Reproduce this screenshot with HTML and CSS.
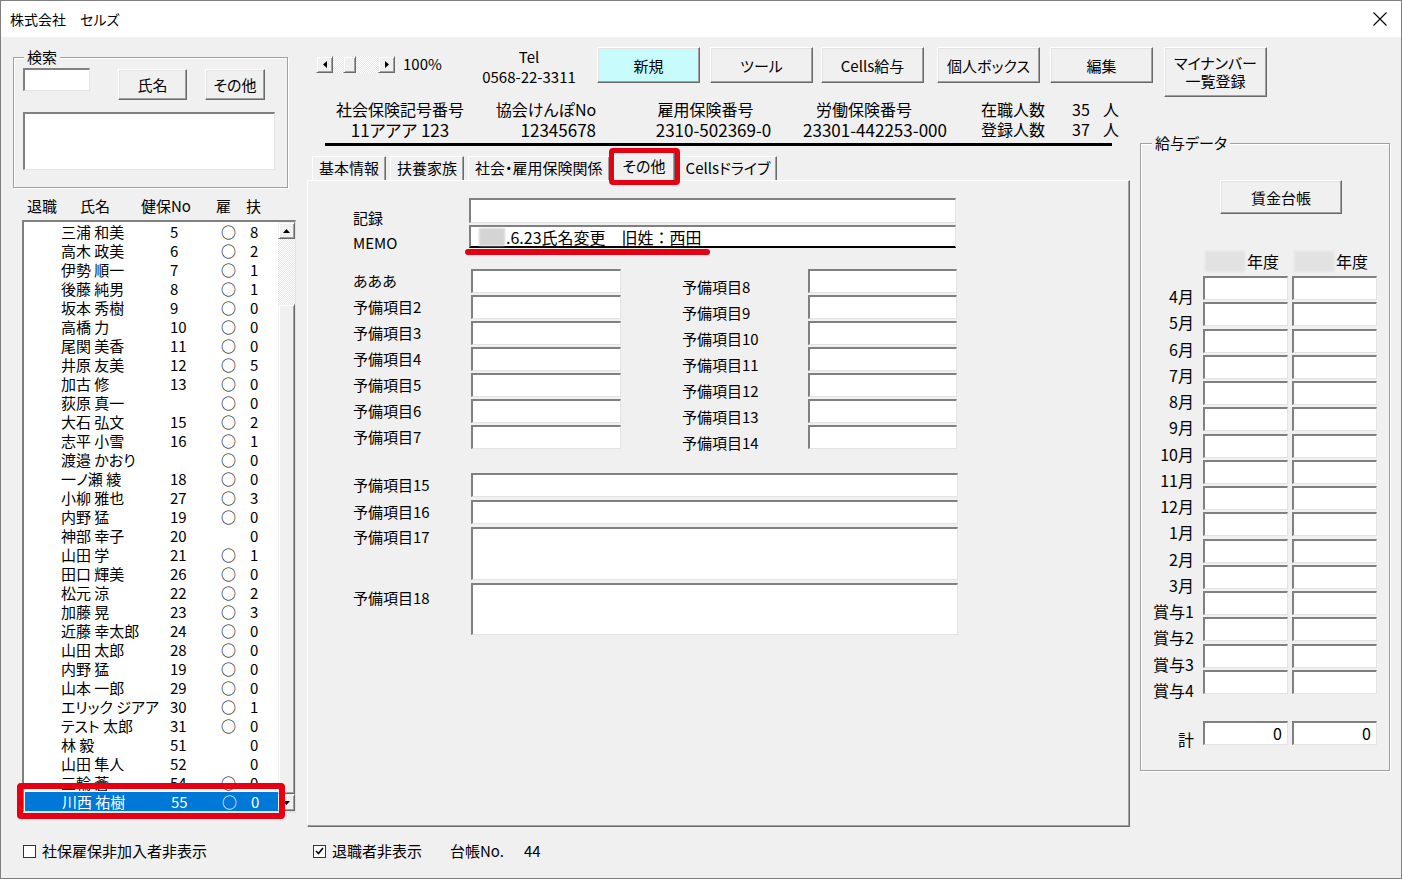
FILE: index.html
```html
<!DOCTYPE html>
<html lang="ja">
<head>
  <meta charset="UTF-8">
  <title>株式会社　セルズ</title>
  <link rel="stylesheet" href="styles.css">
</head>
<body>
  <div class="window">
    <div class="titlebar">
      <span class="title">株式会社　セルズ</span>
      <svg class="close" width="14" height="14" viewBox="0 0 14 14"><path d="M0.5 0.5L13.5 13.5M13.5 0.5L0.5 13.5" stroke="#000" stroke-width="1.1" fill="none"/></svg>
    </div>

    <div class="client">
      <!-- left: search + employee list -->
      <aside class="side-left">
        <div class="frame search">
          <span class="caption">検索</span>
          <div class="search-row">
            <div class="field search-input"></div>
            <button class="btn btn-name">氏名</button>
            <button class="btn btn-other">その他</button>
          </div>
          <div class="field search-result"></div>
        </div>

        <div class="list-head">
          <span>退職</span><span>氏名</span><span>健保No</span><span>雇</span><span>扶</span>
        </div>

        <div class="listbox">
          <div class="list-rows">
            <div class="row"><span class="nm">三浦 和美</span><span>5</span><span>○</span><span>8</span></div>
            <div class="row"><span class="nm">高木 政美</span><span>6</span><span>○</span><span>2</span></div>
            <div class="row"><span class="nm">伊勢 順一</span><span>7</span><span>○</span><span>1</span></div>
            <div class="row"><span class="nm">後藤 純男</span><span>8</span><span>○</span><span>1</span></div>
            <div class="row"><span class="nm">坂本 秀樹</span><span>9</span><span>○</span><span>0</span></div>
            <div class="row"><span class="nm">高橋 力</span><span>10</span><span>○</span><span>0</span></div>
            <div class="row"><span class="nm">尾関 美香</span><span>11</span><span>○</span><span>0</span></div>
            <div class="row"><span class="nm">井原 友美</span><span>12</span><span>○</span><span>5</span></div>
            <div class="row"><span class="nm">加古 修</span><span>13</span><span>○</span><span>0</span></div>
            <div class="row"><span class="nm">荻原 真一</span><span></span><span>○</span><span>0</span></div>
            <div class="row"><span class="nm">大石 弘文</span><span>15</span><span>○</span><span>2</span></div>
            <div class="row"><span class="nm">志平 小雪</span><span>16</span><span>○</span><span>1</span></div>
            <div class="row"><span class="nm">渡邉 かおり</span><span></span><span>○</span><span>0</span></div>
            <div class="row"><span class="nm">一ノ瀬 綾</span><span>18</span><span>○</span><span>0</span></div>
            <div class="row"><span class="nm">小柳 雅也</span><span>27</span><span>○</span><span>3</span></div>
            <div class="row"><span class="nm">内野 猛</span><span>19</span><span>○</span><span>0</span></div>
            <div class="row"><span class="nm">神部 幸子</span><span>20</span><span></span><span>0</span></div>
            <div class="row"><span class="nm">山田 学</span><span>21</span><span>○</span><span>1</span></div>
            <div class="row"><span class="nm">田口 輝美</span><span>26</span><span>○</span><span>0</span></div>
            <div class="row"><span class="nm">松元 涼</span><span>22</span><span>○</span><span>2</span></div>
            <div class="row"><span class="nm">加藤 晃</span><span>23</span><span>○</span><span>3</span></div>
            <div class="row"><span class="nm">近藤 幸太郎</span><span>24</span><span>○</span><span>0</span></div>
            <div class="row"><span class="nm">山田 太郎</span><span>28</span><span>○</span><span>0</span></div>
            <div class="row"><span class="nm">内野 猛</span><span>19</span><span>○</span><span>0</span></div>
            <div class="row"><span class="nm">山本 一郎</span><span>29</span><span>○</span><span>0</span></div>
            <div class="row"><span class="nm">エリック ジアアルバ</span><span>30</span><span>○</span><span>1</span></div>
            <div class="row"><span class="nm">テスト 太郎</span><span>31</span><span>○</span><span>0</span></div>
            <div class="row"><span class="nm">林 毅</span><span>51</span><span></span><span>0</span></div>
            <div class="row"><span class="nm">山田 隼人</span><span>52</span><span></span><span>0</span></div>
            <div class="row"><span class="nm">三輪 蒼</span><span>54</span><span>○</span><span>0</span></div>
            <div class="row selected"><span class="nm">川西 祐樹</span><span>55</span><span>○</span><span>0</span></div>
          </div>
          <div class="vscroll">
            <div class="sb-btn"><svg width="7" height="4" viewBox="0 0 7 4"><polygon points="3.5,0 7,4 0,4" fill="#000"/></svg></div>
            <div class="sb-track"></div>
            <div class="sb-thumb"></div>
            <div class="sb-btn"><svg width="7" height="4" viewBox="0 0 7 4"><polygon points="0,0 7,0 3.5,4" fill="#000"/></svg></div>
          </div>
          <div class="mark mark-row"></div>
        </div>

        <label class="check check-left"><span class="box"></span>社保雇保非加入者非表示</label>
      </aside>

      <main class="main">
        <div class="toolbar">
          <div class="hscroll">
            <div class="sb-btn"><svg width="4" height="7" viewBox="0 0 4 7"><polygon points="4,0 4,7 0,3.5" fill="#000"/></svg></div>
            <div class="hs-track"><span class="hs-gap"></span><span class="sb-thumb hs-thumb"></span></div>
            <div class="sb-btn"><svg width="4" height="7" viewBox="0 0 4 7"><polygon points="0,0 4,3.5 0,7" fill="#000"/></svg></div>
          </div>
          <span class="pct">100%</span>
          <div class="tel">Tel<br>0568-22-3311</div>
          <button class="btn tool new">新規</button>
          <button class="btn tool">ツール</button>
          <button class="btn tool tool-cells">Cells給与</button>
          <button class="btn tool tool-box">個人ボックス</button>
          <button class="btn tool">編集</button>
          <button class="btn tool mynumber">マイナンバー<br>一覧登録</button>
        </div>

        <div class="body">
          <div class="center">
            <div class="info">
              <div class="info-col c1"><span class="lbl">社会保険記号番号</span><span class="val">11アアア 123</span></div>
              <div class="info-col c2"><span class="lbl">協会けんぽNo</span><span class="val">12345678</span></div>
              <div class="info-col c3"><span class="lbl">雇用保険番号</span><span class="val">2310-502369-0</span></div>
              <div class="info-col c4"><span class="lbl">労働保険番号</span><span class="val">23301-442253-000</span></div>
              <div class="counts">
                <span>在職人数</span><span>35</span><span>人</span>
                <span>登録人数</span><span>37</span><span>人</span>
              </div>
            </div>

            <div class="tabs">
              <span class="tab">基本情報</span>
              <span class="tab">扶養家族</span>
              <span class="tab">社会・雇用保険関係</span>
              <span class="tab active">その他</span>
              <span class="tab">Cellsドライブ</span>
            </div>

            <div class="page">
              <div class="grid-memo">
                <span class="lbl-end">記録</span><div class="field"></div>
                <span class="lbl-end">MEMO</span>
                <div class="field memo"><span class="redact"></span>.6.23氏名変更　旧姓：西田<span class="mark-line"></span></div>
              </div>

              <div class="grid-spare">
                <span class="lbl">あああ</span><div class="field"></div><span></span><span class="lbl-r">予備項目8</span><div class="field"></div>
                <span class="lbl">予備項目2</span><div class="field"></div><span></span><span class="lbl-r">予備項目9</span><div class="field"></div>
                <span class="lbl">予備項目3</span><div class="field"></div><span></span><span class="lbl-r">予備項目10</span><div class="field"></div>
                <span class="lbl">予備項目4</span><div class="field"></div><span></span><span class="lbl-r">予備項目11</span><div class="field"></div>
                <span class="lbl">予備項目5</span><div class="field"></div><span></span><span class="lbl-r">予備項目12</span><div class="field"></div>
                <span class="lbl">予備項目6</span><div class="field"></div><span></span><span class="lbl-r">予備項目13</span><div class="field"></div>
                <span class="lbl">予備項目7</span><div class="field"></div><span></span><span class="lbl-r">予備項目14</span><div class="field"></div>
              </div>

              <div class="grid-wide">
                <span class="lbl">予備項目15</span><div class="field"></div>
                <span class="lbl">予備項目16</span><div class="field"></div>
                <span class="lbl lbl-top">予備項目17</span><div class="field"></div>
                <span class="lbl lbl-top2">予備項目18</span><div class="field"></div>
              </div>
            </div>

            <div class="footer">
              <label class="check"><span class="box checked"><svg width="9" height="8" viewBox="0 0 9 8"><polyline points="1,4 3.5,6.5 8,1" fill="none" stroke="#000" stroke-width="1.6"/></svg></span>退職者非表示</label>
              <span class="ledger">台帳No.</span>
              <span class="ledger-no">44</span>
            </div>
          </div>

          <!-- right: salary data -->
          <div class="frame salary">
            <span class="caption">給与データ</span>
            <button class="btn btn-ledger">賃金台帳</button>
            <div class="pay-head">
              <span></span>
              <span class="year"><span class="redact-y"></span>年度</span>
              <span class="year"><span class="redact-y"></span>年度</span>
            </div>
            <div class="pay-grid">
              <span class="m">4月</span><div class="field"></div><div class="field"></div>
              <span class="m">5月</span><div class="field"></div><div class="field"></div>
              <span class="m">6月</span><div class="field"></div><div class="field"></div>
              <span class="m">7月</span><div class="field"></div><div class="field"></div>
              <span class="m">8月</span><div class="field"></div><div class="field"></div>
              <span class="m">9月</span><div class="field"></div><div class="field"></div>
              <span class="m">10月</span><div class="field"></div><div class="field"></div>
              <span class="m">11月</span><div class="field"></div><div class="field"></div>
              <span class="m">12月</span><div class="field"></div><div class="field"></div>
              <span class="m">1月</span><div class="field"></div><div class="field"></div>
              <span class="m">2月</span><div class="field"></div><div class="field"></div>
              <span class="m">3月</span><div class="field"></div><div class="field"></div>
              <span class="m">賞与1</span><div class="field"></div><div class="field"></div>
              <span class="m">賞与2</span><div class="field"></div><div class="field"></div>
              <span class="m">賞与3</span><div class="field"></div><div class="field"></div>
              <span class="m">賞与4</span><div class="field"></div><div class="field"></div>
            </div>
            <div class="pay-total">
              <span class="m">計</span><div class="field num">0</div><div class="field num">0</div>
            </div>
          </div>
        </div>
      </main>
    </div>
  </div>
</body>
</html>
```

FILE: styles.css
```css
* {
  box-sizing: border-box;
  margin: 0;
  padding: 0;
}
html, body {
  width: 1402px;
  height: 879px;
  overflow: hidden;
}
body {
  background: #f0f0f0;
  color: #000;
  font-family: "Noto Sans CJK JP", "Noto Sans", sans-serif;
  font-size: 15px;
  line-height: 19px;
  font-feature-settings: "palt";
}
button {
  font: inherit;
  color: inherit;
}

.window {
  width: 1402px;
  height: 879px;
  border: 1px solid #7f7f7f;
  display: flex;
  flex-direction: column;
}
.titlebar {
  height: 36px;
  background: #fff;
  display: flex;
  align-items: center;
  justify-content: space-between;
  padding: 0 14px 0 9px;
}
.title {
  font-size: 14px;
}
.client {
  flex: 1;
  display: flex;
}

/* 3D controls */
.btn {
  background: #f0f0f0;
  border: 1px solid;
  border-color: #fff #696969 #696969 #fff;
  box-shadow: inset -1px -1px #a0a0a0, inset 1px 1px #e3e3e3;
  display: flex;
  align-items: center;
  justify-content: center;
  text-align: center;
}
.field {
  background: #fff;
  border-style: solid;
  border-width: 2px 1px 1px 2px;
  border-color: #808080 #e3e3e3 #e3e3e3 #808080;
}
.frame {
  position: relative;
  border: 1px solid #a0a0a0;
  box-shadow: inset 1px 1px #fff, 1px 1px #fff;
}
.caption {
  position: absolute;
  top: -10px;
  left: 10px;
  padding: 0 3px;
  background: #f0f0f0;
  line-height: 18px;
}

/* left column */
.side-left {
  width: 306px;
  padding-left: 12px;
}
.search {
  margin-top: 20px;
  width: 275px;
  height: 131px;
  padding: 10px 0 0 9px;
}
.search-row {
  display: flex;
  align-items: flex-start;
}
.search-input {
  width: 67px;
  height: 23px;
}
.btn-name {
  margin: 1px 0 0 28px;
  width: 69px;
  height: 31px;
}
.btn-other {
  margin: 1px 0 0 18px;
  width: 60px;
  height: 31px;
}
.search-result {
  margin-top: 12px;
  width: 252px;
  height: 58px;
}

.list-head {
  margin-top: 9px;
  padding-left: 14px;
  line-height: 18px;
  display: grid;
  grid-template-columns: 53px 61px 75px 30px auto;
}
.listbox {
  position: relative;
  margin: 5px 0 0 9px;
  width: 274px;
  height: 593px;
  display: flex;
  border-style: solid;
  border-width: 2px 1px 2px 2px;
  border-color: #808080 #e3e3e3 #e3e3e3 #808080;
  background: #fff;
}
.list-rows {
  flex: 1;
  overflow: hidden;
}
.row {
  display: grid;
  grid-template-columns: 109px 51px 29px auto;
  height: 19px;
  line-height: 19px;
  padding-left: 37px;
  white-space: nowrap;
}
.row .nm {
  margin-right: 11px;
  overflow: hidden;
}
.row.selected {
  background: #0078d7;
  color: #fff;
  margin-left: 1px;
}
.vscroll {
  width: 17px;
  display: flex;
  flex-direction: column;
}
.sb-btn {
  width: 17px;
  height: 17px;
  background: #f0f0f0;
  border: 1px solid;
  border-color: #f0f0f0 #696969 #696969 #f0f0f0;
  box-shadow: inset 1px 1px #fff, inset -1px -1px #a0a0a0;
  display: flex;
  align-items: center;
  justify-content: center;
}
.sb-track {
  height: 65px;
  background: repeating-conic-gradient(#fff 0 25%, #e6e6e6 0 50%) 0 0 / 2px 2px;
}
.sb-thumb {
  flex: 1;
  background: #f0f0f0;
  border: 1px solid;
  border-color: #f0f0f0 #696969 #696969 #f0f0f0;
  box-shadow: inset 1px 1px #fff, inset -1px -1px #a0a0a0;
}
.mark {
  position: absolute;
  border: 6px solid #e60012;
  border-radius: 4px;
}
.mark-row {
  left: -7px;
  top: 561px;
  width: 268px;
  height: 36px;
}

.check {
  display: flex;
  align-items: center;
  line-height: 18px;
}
.check-left {
  margin-top: 29px;
  padding-left: 10px;
}
.box {
  width: 13px;
  height: 13px;
  margin-right: 6px;
  background: #fff;
  border: 1px solid #333;
  display: flex;
  align-items: center;
  justify-content: center;
}

/* main column */
.main {
  flex: 1;
  display: flex;
  flex-direction: column;
}
.toolbar {
  margin-top: 10px;
  height: 50px;
  padding-left: 9px;
  display: flex;
  align-items: flex-start;
}
.hscroll {
  margin-top: 9px;
  width: 79px;
  height: 17px;
  display: flex;
}
.hs-track {
  flex: 1;
  display: flex;
  background: repeating-conic-gradient(#fff 0 25%, #e6e6e6 0 50%) 0 0 / 2px 2px;
}
.hs-gap {
  width: 10px;
}
.hs-thumb {
  flex: none;
  width: 13px;
}
.pct {
  margin: 8px 0 0 8px;
  width: 45px;
  line-height: 18px;
}
.tel {
  margin-left: 26px;
  width: 110px;
  text-align: center;
  line-height: 20px;
}
.tool {
  width: 103px;
  height: 36px;
  margin-left: 10px;
}
.tool.new {
  margin-left: 13px;
  background: #c8fcfc;
}
.tool.tool-cells {
  margin-left: 8px;
}
.tool.tool-box {
  margin-left: 13px;
}
.tool.mynumber {
  margin-left: 11px;
  height: 50px;
  line-height: 18px;
}

.body {
  display: flex;
  align-items: flex-start;
}
.center {
  width: 823px;
}

.info {
  margin: 3px 0 0 18px;
  width: 787px;
  padding-bottom: 3px;
  border-bottom: 3px solid #000;
  display: flex;
}
.info-col {
  flex: none;
  display: flex;
  flex-direction: column;
  text-align: center;
}
.info-col .lbl {
  font-size: 16px;
  line-height: 18px;
}
.info-col .val {
  margin-top: 1px;
  font-size: 17px;
  line-height: 21px;
}
.c1 { width: 150px; }
.c2 { width: 125px; }
.c2 .lbl { text-align: left; padding-left: 17px; }
.c2 .val { text-align: right; padding-right: 4px; }
.c3 { width: 195px; padding-left: 32px; }
.c3 .lbl { padding-right: 16px; }
.c4 { width: 160px; }
.c4 .lbl { padding-right: 22px; }
.counts {
  flex: none;
  margin-left: 26px;
  display: grid;
  grid-template-columns: 91px 31px auto;
  font-size: 16px;
  line-height: 18px;
}

.tabs {
  margin-top: 6px;
  height: 28px;
  padding-left: 5px;
  display: flex;
  align-items: flex-end;
  gap: 4px;
  position: relative;
  z-index: 1;
}
.tab {
  height: 24px;
  line-height: 22px;
  padding: 0 6px;
  border-style: solid;
  border-width: 1px 1px 0 1px;
  border-color: #fff #696969 #fff #fff;
  box-shadow: inset -1px 0 #a0a0a0;
  white-space: nowrap;
}
.tab.active {
  position: relative;
  height: 29px;
  margin-bottom: -1px;
  padding: 0 8px;
  line-height: 26px;
  background: #f0f0f0;
}
.tab.active::after {
  content: '';
  position: absolute;
  top: -5px;
  left: -6px;
  right: -6px;
  bottom: -4px;
  border: 5px solid #e60012;
  border-radius: 4px;
}

.page {
  height: 647px;
  border-style: solid;
  border-width: 1px;
  border-color: #fff #696969 #696969 #fff;
  box-shadow: inset -1px -1px #a0a0a0;
  padding: 17px 0 0 45px;
}
.grid-memo {
  display: grid;
  grid-template-columns: 116px 487px;
  grid-template-rows: 25px 23px;
  row-gap: 2px;
}
.lbl-end {
  align-self: end;
  line-height: 16px;
  margin-bottom: -3px;
}
.memo {
  position: relative;
  border-bottom: 2px solid #000;
  padding-left: 8px;
  font-size: 16px;
  line-height: 20px;
  display: flex;
  align-items: center;
  white-space: nowrap;
  font-feature-settings: normal;
}
.redact {
  width: 26px;
  height: 18px;
  margin-right: 1px;
  background: #d4d4d4;
  filter: blur(1px);
}
.mark-line {
  position: absolute;
  left: -6px;
  top: 22px;
  width: 245px;
  height: 6px;
  border-radius: 3px;
  background: #e60012;
}

.grid-spare {
  margin-top: 21px;
  display: grid;
  grid-template-columns: 118px 150px 61px 126px 149px;
  grid-auto-rows: 24px;
  row-gap: 2px;
}
.lbl {
  align-self: center;
  line-height: 18px;
}
.lbl-r {
  align-self: end;
  line-height: 18px;
  margin-bottom: -3px;
}
.grid-wide {
  margin-top: 24px;
  display: grid;
  grid-template-columns: 118px 487px;
  grid-template-rows: 24px 24px 53px 52px;
  row-gap: 3px;
}
.lbl-top {
  align-self: start;
  padding-top: 1px;
}
.lbl-top2 {
  align-self: start;
  padding-top: 6px;
}

.footer {
  margin-top: 15px;
  padding-left: 6px;
  display: flex;
  align-items: center;
  line-height: 18px;
}
.ledger {
  margin-left: 28px;
}
.ledger-no {
  margin-left: 20px;
}

/* salary frame */
.salary {
  margin: 46px 0 0 10px;
  width: 250px;
  height: 628px;
  font-size: 16px;
}
.salary .caption {
  font-size: 15px;
  left: 11px;
}
.btn-ledger {
  margin: 36px 0 0 79px;
  width: 122px;
  height: 34px;
  font-size: 15px;
}
.pay-head,
.pay-grid,
.pay-total {
  display: grid;
  grid-template-columns: 58px 85px 85px;
  column-gap: 4px;
}
.pay-head {
  margin-top: 37px;
  height: 21px;
  line-height: 21px;
}
.year {
  display: flex;
  justify-content: flex-end;
  padding-right: 9px;
}
.redact-y {
  width: 40px;
  height: 21px;
  margin-right: 2px;
  background: #e2e2e2;
  filter: blur(1px);
}
.pay-grid {
  margin-top: 4px;
  grid-template-rows: repeat(16, 24px);
  row-gap: 2.25px;
}
.m {
  align-self: end;
  text-align: right;
  padding-right: 5px;
  line-height: 16px;
  margin-bottom: -4px;
  white-space: nowrap;
}
.pay-total {
  margin-top: 27px;
  grid-template-rows: 24px;
}
.pay-total .m {
  margin-bottom: -2px;
}
.num {
  text-align: right;
  padding-right: 5px;
  line-height: 21px;
}
```
